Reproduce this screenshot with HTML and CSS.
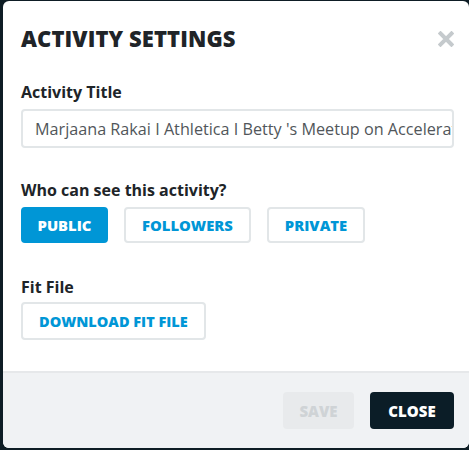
FILE: index.html
```html
<!DOCTYPE html>
<html>
<head>
<meta charset="utf-8">
<link rel="stylesheet" href="styles.css">
</head>
<body>
<div class="modal">
  <div class="modal-body">
    <div class="header">
      <h1 class="title">ACTIVITY SETTINGS</h1>
      <span class="close-x" aria-label="close">
        <svg width="16" height="16" viewBox="0 0 16 16"><path d="M2.5 2.5 L13.5 13.5 M13.5 2.5 L2.5 13.5" stroke="#c5cacd" stroke-width="4" stroke-linecap="square"/></svg>
      </span>
    </div>
    <div class="field">
      <label class="label">Activity Title</label>
      <div class="input"><span class="input-text">Marjaana Rakai I Athletica I Betty 's Meetup on Accelerated Training</span></div>
    </div>
    <div class="field">
      <label class="label">Who can see this activity?</label>
      <div class="btn-row">
        <button class="btn btn-active">PUBLIC</button>
        <button class="btn btn-outline">FOLLOWERS</button>
        <button class="btn btn-outline">PRIVATE</button>
      </div>
    </div>
    <div class="field field-last">
      <label class="label">Fit File</label>
      <div class="btn-row">
        <button class="btn btn-outline btn-wide">DOWNLOAD FIT FILE</button>
      </div>
    </div>
  </div>
  <div class="footer">
    <button class="fbtn fbtn-save">SAVE</button>
    <button class="fbtn fbtn-close">CLOSE</button>
  </div>
</div>
</body>
</html>
```
FILE: styles.css
```css
html, body {
  margin: 0;
  padding: 0;
  background: #0e1d25;
  height: 100%;
  overflow: hidden;
}
body {
  font-family: "Open Sans", "Noto Sans", sans-serif;
  color: #1f2326;
}
.modal {
  margin: 1px 0 0 3px;
  width: 466px;
  height: 447px;
  background: #ffffff;
  border-radius: 6px;
  overflow: hidden;
  display: flex;
  flex-direction: column;
}
.modal-body {
  flex: 1;
  padding: 22px 15px 0 18px;
}
.header {
  display: flex;
  justify-content: space-between;
  align-items: center;
  height: 30px;
  margin-bottom: 29px;
}
.title {
  margin: 0;
  font-size: 22px;
  line-height: 30px;
  font-weight: 800;
  letter-spacing: 0.1px;
  color: #202428;
}
.close-x {
  display: flex;
  margin-top: 1px;
}
.field {
  margin-bottom: 32px;
}
.label {
  display: block;
  font-size: 16px;
  font-weight: 700;
  color: #202428;
  margin-bottom: 7px;
  line-height: 20px;
}
.field-last .label {
  margin-bottom: 5px;
}
.input {
  height: 35px;
  border: 2px solid #e2e6e8;
  border-radius: 4px;
  padding: 0 12px;
  display: flex;
  align-items: center;
  overflow: hidden;
}
.input-text {
  font-size: 16.2px;
  color: #51565a;
  white-space: nowrap;
}
.btn-row {
  display: flex;
  gap: 16px;
}
.btn {
  font-family: "Open Sans", "Noto Sans", sans-serif;
  font-weight: 800;
  font-size: 14.8px;
  height: 36px;
  border-radius: 4px;
  padding: 0 16px;
  cursor: pointer;
}
.btn-active {
  background: #0096d6;
  color: #ffffff;
  border: 2px solid #0096d6;
  width: 87px;
  padding: 0;
}
.btn-outline {
  background: #ffffff;
  color: #0096d6;
  border: 2px solid #e2e6e8;
}
.btn-wide {
  height: 38px;
  font-size: 14.5px;
  padding: 0 16px;
}
.field-last {
  margin-top: 34px;
  margin-bottom: 0;
}
.footer {
  height: 75px;
  border-top: 2px solid #e6e8ea;
  background: #f0f2f4;
  display: flex;
  justify-content: flex-end;
  align-items: center;
  gap: 16px;
  padding: 0 15px 0 0;
}
.fbtn {
  font-family: "Open Sans", "Noto Sans", sans-serif;
  font-weight: 800;
  font-size: 15px;
  height: 37px;
  border: none;
  border-radius: 4px;
}
.fbtn-save {
  width: 71px;
  background: #e8eaec;
  color: #cfd3d6;
}
.fbtn-close {
  width: 84px;
  background: #0b1d27;
  color: #ffffff;
}
```
